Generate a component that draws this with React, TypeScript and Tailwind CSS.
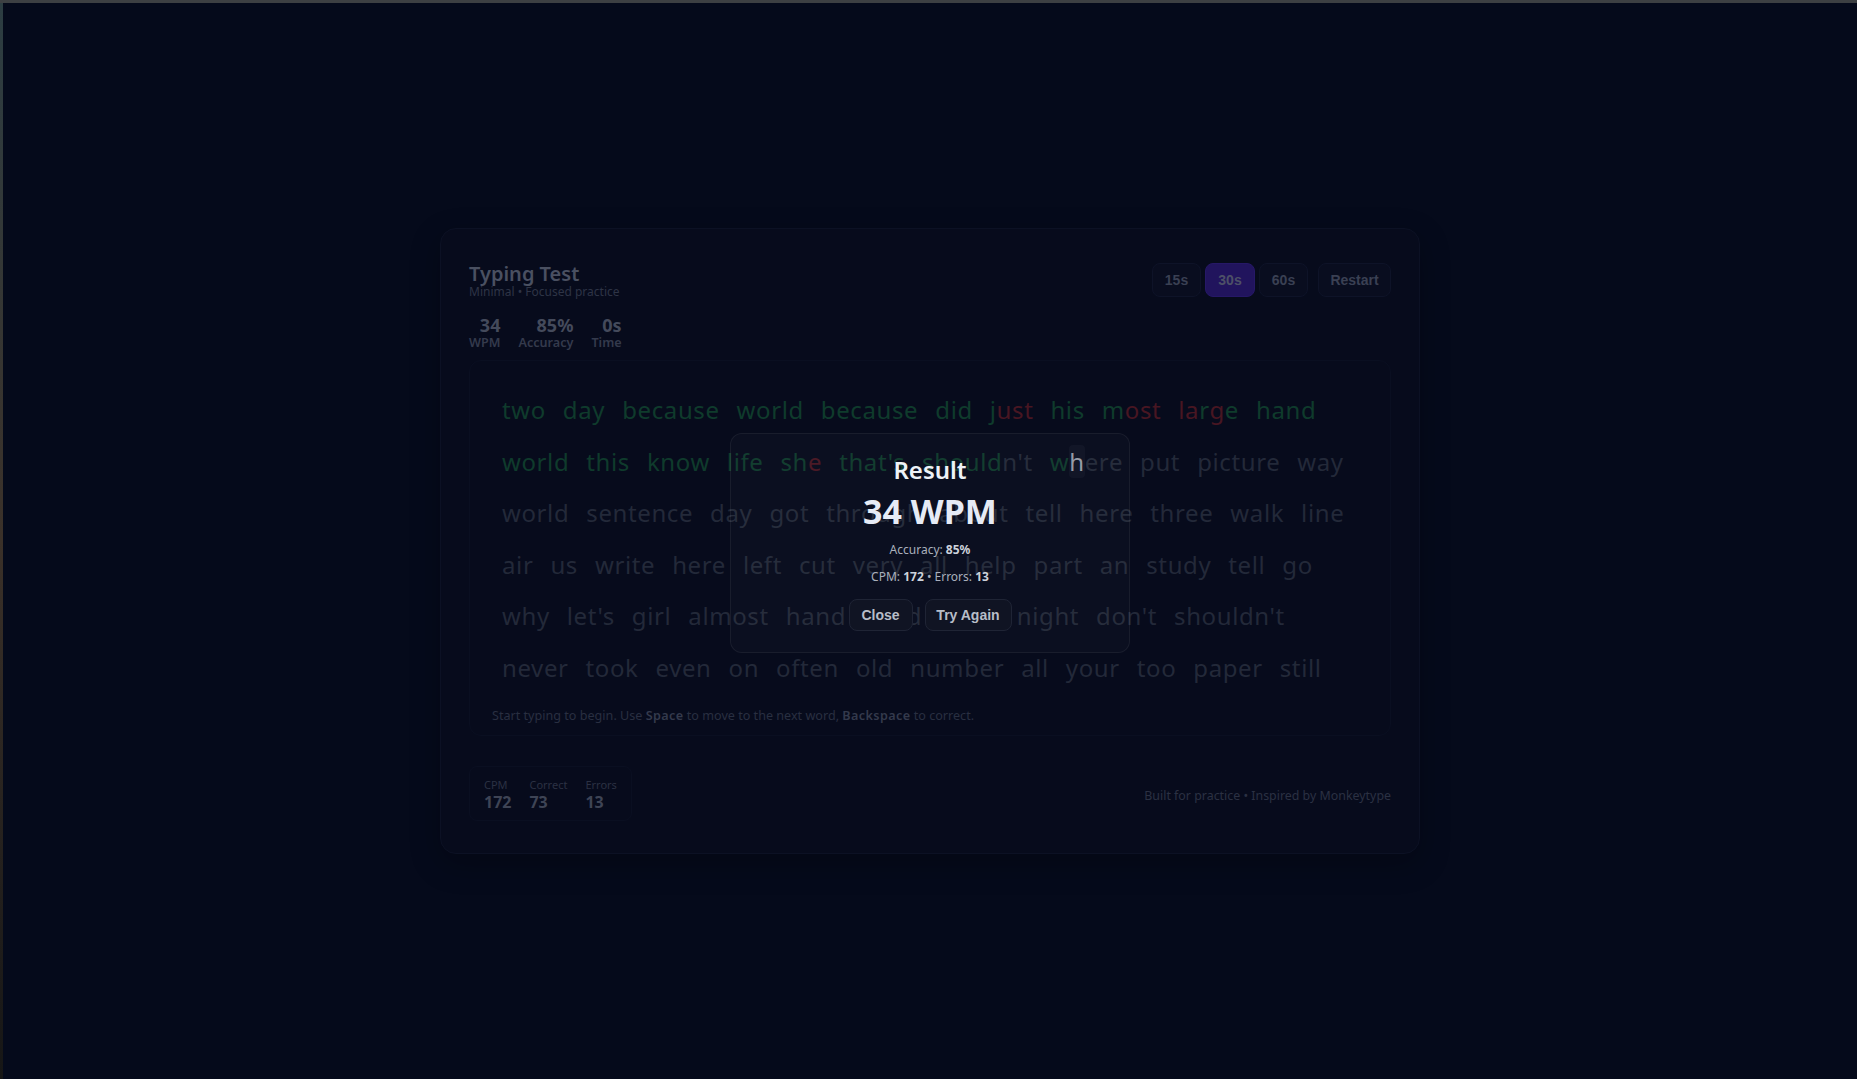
import React from "react";

type Word = { t: string; m?: string };

const rows: Word[][] = [
  [
    { t: "two", m: "ggg" },
    { t: "day", m: "ggg" },
    { t: "because", m: "ggggggg" },
    { t: "world", m: "ggggg" },
    { t: "because", m: "ggggggg" },
    { t: "did", m: "ggg" },
    { t: "just", m: "grrr" },
    { t: "his", m: "ggg" },
    { t: "most", m: "grrr" },
    { t: "large", m: "rrgrg" },
    { t: "hand", m: "gggg" },
  ],
  [
    { t: "world", m: "ggggg" },
    { t: "this", m: "gggg" },
    { t: "know", m: "gggg" },
    { t: "life", m: "gggg" },
    { t: "she", m: "ggr" },
    { t: "that's", m: "gggggg" },
    { t: "shouldn't", m: "gggggguuu" },
    { t: "where", m: "gcuuu" },
    { t: "put" },
    { t: "picture" },
    { t: "way" },
  ],
  "world sentence day got through about tell here three walk line".split(" ").map((t) => ({ t })),
  "air us write here left cut very all help part an study tell go".split(" ").map((t) => ({ t })),
  "why let's girl almost hand head large night don't shouldn't".split(" ").map((t) => ({ t })),
  "never took even on often old number all your too paper still".split(" ").map((t) => ({ t })),
];

function Letter({ ch, k }: { ch: string; k: string }) {
  if (k === "g") return <span className="text-[#0f3b2c]">{ch}</span>;
  if (k === "r") return <span className="text-[#481622]">{ch}</span>;
  if (k === "c")
    return <span className="text-[#959aa6] bg-white/[0.03] rounded-sm">{ch}</span>;
  return <span className="text-[#232939]">{ch}</span>;
}

function WordView({ w }: { w: Word }) {
  const m = w.m ?? "u".repeat(w.t.length);
  return (
    <span className="whitespace-nowrap">
      {w.t.split("").map((ch, i) => (
        <Letter key={i} ch={ch} k={m[i] ?? "u"} />
      ))}
    </span>
  );
}

const sans = { fontFamily: '"Noto Sans", "Open Sans", sans-serif' };
const arial = { fontFamily: '"Liberation Sans", Arial, sans-serif' };

export default function App() {
  return (
    <div className="w-full h-screen flex flex-col bg-[#050a1b] overflow-hidden" style={sans}>
      <div className="h-[3px] bg-[#3d4043] shrink-0" />
      <div className="flex flex-1 min-h-0">
        <div className="w-[3px] shrink-0 bg-gradient-to-b from-[#2c3d42] via-[#3b3129] to-[#161616]" />
        <main className="relative flex-1 flex items-center justify-center">
          <div className="w-[980px] px-7 pt-[34px] pb-8 rounded-2xl bg-[#070b1c] border border-[#0c1124] shadow-[0_10px_30px_rgba(0,0,0,0.25)] flex flex-col">
            {/* header */}
            <div className="flex justify-between items-start">
              <div className="flex flex-col">
                <div className="text-xl leading-[21px] font-semibold text-[#4a5061]">Typing Test</div>
                <div className="text-xs leading-4 text-[#2e3446]">Minimal • Focused practice</div>
                <div className="flex gap-[18px] mt-[15px]">
                  {[
                    ["34", "WPM"],
                    ["85%", "Accuracy"],
                    ["0s", "Time"],
                  ].map(([v, l]) => (
                    <div key={l} className="flex flex-col items-end">
                      <div className="text-lg leading-[21px] font-bold text-[#444a5b]">{v}</div>
                      <div className="text-[12.6px] leading-[14px] font-semibold text-[#343a4c]">{l}</div>
                    </div>
                  ))}
                </div>
              </div>
              <div className="flex items-center" style={arial}>
                <div className="flex gap-1">
                  <button className="h-[34px] w-[49px] rounded-lg bg-[#090d1f] border border-[#0e1328] text-sm font-bold text-[#3a4053]">15s</button>
                  <button className="h-[34px] w-[50px] rounded-lg bg-[#21145d] border border-[#261867] text-sm font-bold text-[#4d5067]">30s</button>
                  <button className="h-[34px] w-[49px] rounded-lg bg-[#090d1f] border border-[#0e1328] text-sm font-bold text-[#3a4053]">60s</button>
                </div>
                <button className="ml-2.5 h-[34px] w-[73px] rounded-lg bg-[#090d1f] border border-[#0e1328] text-sm font-bold text-[#3a4053]">Restart</button>
              </div>
            </div>

            {/* text box */}
            <div className="mt-[10px] rounded-xl bg-[#070b1c] border border-[#0a0f21] px-[22px] pt-[23px] pb-[11px]">
              <div className="px-2.5 text-2xl tracking-[0.6px]">
                {rows.map((r, i) => (
                  <div key={i} className="flex gap-x-[17px] h-[51.6px] items-center">
                    {r.map((w, j) => (
                      <WordView key={j} w={w} />
                    ))}
                  </div>
                ))}
              </div>
              <div className="mt-[14px] text-[12.6px] leading-4 text-[#292f41]">
                Start typing to begin. Use <span className="font-semibold tracking-[0.4px] text-[#343a4c]">Space</span> to move to the next word,{" "}
                <span className="font-semibold tracking-[0.4px] text-[#343a4c]">Backspace</span> to correct.
              </div>
            </div>

            {/* footer */}
            <div className="mt-[30px] flex items-center justify-between">
              <div className="flex gap-[18px] px-[14px] pt-[11px] pb-2 rounded-lg border border-[#0a0f21]">
                {[
                  ["CPM", "172"],
                  ["Correct", "73"],
                  ["Errors", "13"],
                ].map(([l, v]) => (
                  <div key={l} className="flex flex-col">
                    <div className="text-[11px] leading-[14px] text-[#2b3143]">{l}</div>
                    <div className="text-base leading-5 font-bold text-[#3e4455]">{v}</div>
                  </div>
                ))}
              </div>
              <div className="text-[12.4px] text-[#2b3143] mt-[7px]">Built for practice • Inspired by Monkeytype</div>
            </div>
          </div>

          {/* modal overlay */}
          <div className="absolute inset-0 flex items-center justify-center">
            <div className="mt-1 w-[400px] h-[220px] rounded-xl bg-white/[0.02] border border-white/[0.06] flex flex-col items-center pt-5">
              <div className="text-2xl leading-8 font-semibold text-[#eef2f8]">Result</div>
              <div className="mt-[5px] text-[34px] leading-10 font-bold text-[#e6ebf5]">34 WPM</div>
              <div className="mt-[11px] text-xs leading-4 text-[#a9afbc]">
                Accuracy: <span className="font-bold text-[#cdd2db]">85%</span>
              </div>
              <div className="mt-[11px] text-xs leading-4 text-[#a9afbc]">
                CPM: <span className="font-bold text-[#cdd2db]">172</span> • Errors: <span className="font-bold text-[#cdd2db]">13</span>
              </div>
              <div className="mt-[14px] flex gap-3" style={arial}>
                <button className="h-8 w-16 rounded-lg bg-[#101423] border border-[#1f2435] text-sm font-bold text-[#b7bdc8]">Close</button>
                <button className="h-8 w-[87px] rounded-lg bg-[#101423] border border-[#1f2435] text-sm font-bold text-[#b7bdc8]">Try Again</button>
              </div>
            </div>
          </div>
        </main>
      </div>
    </div>
  );
}
